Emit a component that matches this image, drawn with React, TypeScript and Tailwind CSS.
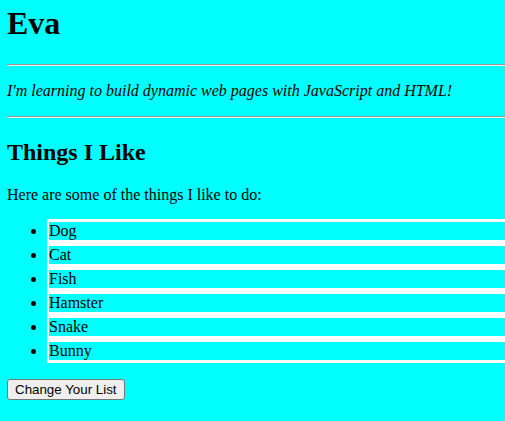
const LIKES = ["Dog", "Cat", "Fish", "Hamster", "Snake", "Bunny"];

function Rule({ className = "" }: { className?: string }) {
  return <div className={`h-[2px] border-t border-b border-t-[#9a9a9a] border-b-[#eeeeee] ${className}`} />;
}

export default function App() {
  return (
    <div className="min-h-screen w-[505px] overflow-hidden bg-[#00ffff] pl-[7px] pt-[5px] text-black font-['Liberation_Serif',serif] text-[16px]">
      <h1 className="text-[32px] font-bold leading-[37px]">Eva</h1>
      <Rule className="mt-[22px]" />
      <p className="mt-[16px] italic leading-[18px] whitespace-nowrap">
        I'm learning to build dynamic web pages with JavaScript and HTML!
      </p>
      <Rule className="mt-[16px]" />
      <h2 className="mt-[20px] text-[24px] font-bold leading-[28px]">Things I Like</h2>
      <p className="mt-[20px] leading-[18px]">Here are some of the things I like to do:</p>
      <ul className="mt-[15px] list-disc list-outside pl-[40px]">
        {LIKES.map((item) => (
          <li
            key={item}
            className="border-y-[3px] border-l-2 border-white leading-[18px]"
          >
            {item}
          </li>
        ))}
      </ul>
      <button
        type="button"
        className="mt-[16px] rounded-[3px] border border-[#767676] bg-[#efefef] px-[7px] py-[2px] text-[13.333px] leading-[15px] font-['Liberation_Sans',Arial,sans-serif]"
      >
        Change Your List
      </button>
    </div>
  );
}
